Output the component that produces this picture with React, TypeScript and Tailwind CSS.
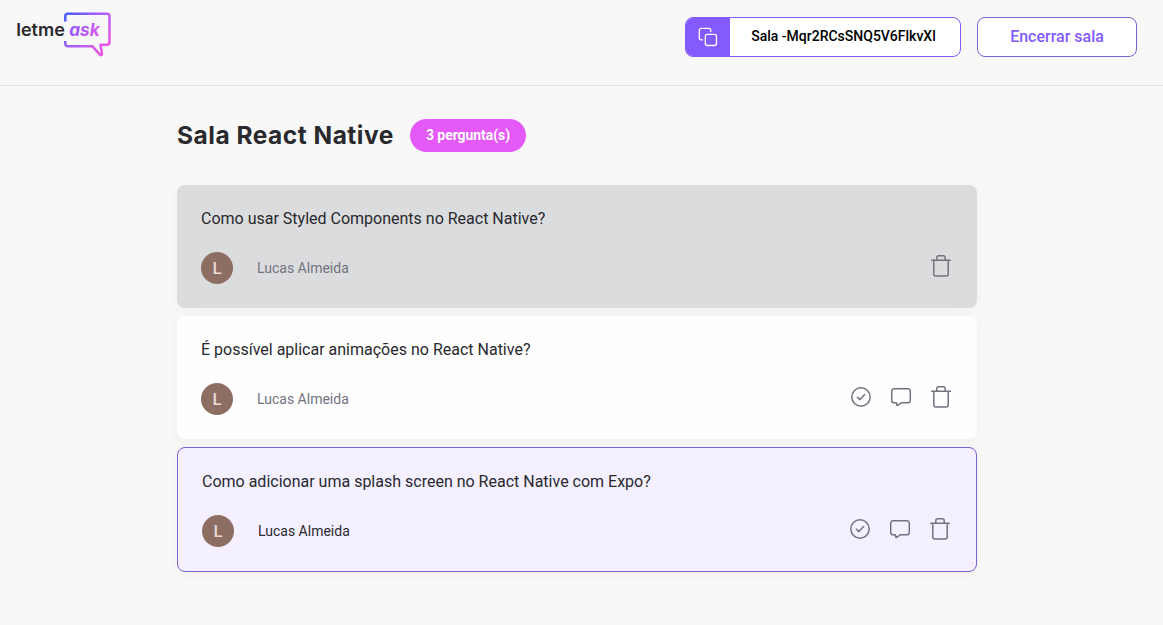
type Question = {
  text: string;
  author: string;
  state: "answered" | "open" | "highlighted";
};

const questions: Question[] = [
  { text: "Como usar Styled Components no React Native?", author: "Lucas Almeida", state: "answered" },
  { text: "É possível aplicar animações no React Native?", author: "Lucas Almeida", state: "open" },
  { text: "Como adicionar uma splash screen no React Native com Expo?", author: "Lucas Almeida", state: "highlighted" },
];

const cardStyles = {
  answered: "bg-[#dbdcdd]",
  open: "bg-[#fefefe]",
  highlighted: "border border-[#7e5fd2] bg-[#f4f0ff]",
};

function Logo() {
  return (
    <svg width="96" height="46" viewBox="0 0 96 46" aria-label="letmeask">
      <defs>
        <linearGradient id="bubble" gradientUnits="userSpaceOnUse" x1="48" y1="4" x2="90" y2="40">
          <stop offset="0" stopColor="#485bff" />
          <stop offset="0.5" stopColor="#b060f6" />
          <stop offset="1" stopColor="#f055e4" />
        </linearGradient>
        <linearGradient id="word" gradientUnits="userSpaceOnUse" x1="52" y1="12" x2="82" y2="26">
          <stop offset="0" stopColor="#8757fd" />
          <stop offset="1" stopColor="#db5cee" />
        </linearGradient>
      </defs>
      <path
        d="M49.3 9.5V4.2Q49.3 1.7 51.8 1.7H91Q93.5 1.7 93.5 4.2V30Q93.5 32.7 91 32.7H84.4L86 41.5Q86.2 44 84 42.7L76.2 34.2H52.3Q49.3 34.2 49.3 31.4V29"
        fill="none"
        stroke="url(#bubble)"
        strokeWidth="2.5"
        strokeLinejoin="round"
      />
      <text
        x="0.2"
        y="24.2"
        textLength="48.6"
        lengthAdjust="spacingAndGlyphs"
        fill="#29292e"
        className="font-['Inter',sans-serif] text-[17.5px] font-semibold"
      >
        letme
      </text>
      <text
        x="53.2"
        y="24.2"
        textLength="30.5"
        lengthAdjust="spacingAndGlyphs"
        fill="url(#word)"
        className="font-['Inter',sans-serif] text-[17.5px] font-bold italic"
      >
        ask
      </text>
    </svg>
  );
}

function CopyIcon() {
  return (
    <svg width="20" height="20" viewBox="0 0 20 20" fill="none" stroke="#fff" strokeWidth="1.3" strokeLinecap="round" strokeLinejoin="round">
      <rect x="7.3" y="7.3" width="11.2" height="11.2" rx="2" />
      <path d="M4.5 12.8H3.3a2 2 0 0 1-2-2V3.3a2 2 0 0 1 2-2h7.5a2 2 0 0 1 2 2v1.2" />
    </svg>
  );
}

const iconProps = {
  width: 24,
  height: 24,
  viewBox: "0 0 24 24",
  fill: "none",
  stroke: "#737380",
  strokeWidth: 1.5,
  strokeLinecap: "round" as const,
  strokeLinejoin: "round" as const,
};

function CheckIcon() {
  return (
    <svg {...iconProps}>
      <circle cx="12" cy="12" r="9.2" />
      <path d="M8.4 12.3l2.5 2.3 4.8-5" />
    </svg>
  );
}

function AnswerIcon() {
  return (
    <svg {...iconProps}>
      <path d="M5 3.8h14a2.3 2.3 0 0 1 2.3 2.3v9.4a2.3 2.3 0 0 1-2.3 2.3h-6.6L8 20.6l-.7-2.8H5a2.3 2.3 0 0 1-2.3-2.3V6.1A2.3 2.3 0 0 1 5 3.8Z" />
    </svg>
  );
}

function TrashIcon() {
  return (
    <svg {...iconProps}>
      <path d="M2.7 6.2h18.6M7.8 6V3.8a2 2 0 0 1 2-2h4.4a2 2 0 0 1 2 2V6M4.8 6.2v13.9a2 2 0 0 0 2 2h10.4a2 2 0 0 0 2-2V6.2" />
    </svg>
  );
}

function QuestionCard({ text, author, state }: Question) {
  return (
    <article className={`rounded-lg p-6 shadow-[0_2px_12px_rgba(0,0,0,0.04)] ${cardStyles[state]}`}>
      <p className="text-base leading-[19px] text-[#29292e]">{text}</p>
      <footer className="mt-6 flex h-8 justify-between">
        <div className="flex items-center gap-6">
          <span className="flex size-8 items-center justify-center rounded-full bg-[#8d6e63] pt-px text-[17px] font-medium text-[#e6dad6]">
            L
          </span>
          <span className={`text-sm ${state === "highlighted" ? "text-[#29292e]" : "text-[#737380]"}`}>{author}</span>
        </div>
        <div className="flex items-start gap-4 pt-0.5">
          {state !== "answered" && (
            <>
              <button type="button" aria-label="Marcar como respondida"><CheckIcon /></button>
              <button type="button" aria-label="Destacar pergunta"><AnswerIcon /></button>
            </>
          )}
          <button type="button" aria-label="Remover pergunta"><TrashIcon /></button>
        </div>
      </footer>
    </article>
  );
}

export default function App() {
  return (
    <div className="min-h-screen bg-[#f8f8f8] pb-10 font-['Roboto',sans-serif]">
      <header className="h-[86px] border-b border-[#e2e2e2]">
        <div className="flex items-start justify-between pr-[26px] pl-4">
          <div className="pt-3">
            <Logo />
          </div>
          <div className="flex gap-4 pt-[17px]">
            <button type="button" className="flex h-10 w-[276px] overflow-hidden rounded-lg border border-[#835afd] bg-white">
              <span className="flex h-full w-11 items-center justify-center bg-[#835afd]">
                <CopyIcon />
              </span>
              <span className="flex-1 pr-[3px] text-center text-sm leading-[37px] font-medium text-black">
                Sala -Mqr2RCsSNQ5V6FlkvXl
              </span>
            </button>
            <button type="button" className="h-10 w-40 rounded-lg border border-[#7e5fd2] bg-white pb-0.5 text-base leading-[38px] font-medium text-[#835afd]">
              Encerrar sala
            </button>
          </div>
        </div>
      </header>
      <main className="ml-[177px] w-[800px]">
        <div className="flex items-center gap-4 pt-[33px] pb-[33px]">
          <h1 className="h-[33px] w-[217px] font-['Inter',sans-serif] text-[24.5px] leading-[33px] font-bold tracking-[0.5px] whitespace-nowrap text-[#29292e]">
            Sala React Native
          </h1>
          <span className="h-[33px] w-[116px] rounded-full bg-[#e559f9] text-center text-sm leading-[33px] font-bold tracking-[-0.05px] text-white">
            3 pergunta(s)
          </span>
        </div>
        <div className="flex flex-col gap-2">
          {questions.map((question) => (
            <QuestionCard key={question.text} {...question} />
          ))}
        </div>
      </main>
    </div>
  );
}
